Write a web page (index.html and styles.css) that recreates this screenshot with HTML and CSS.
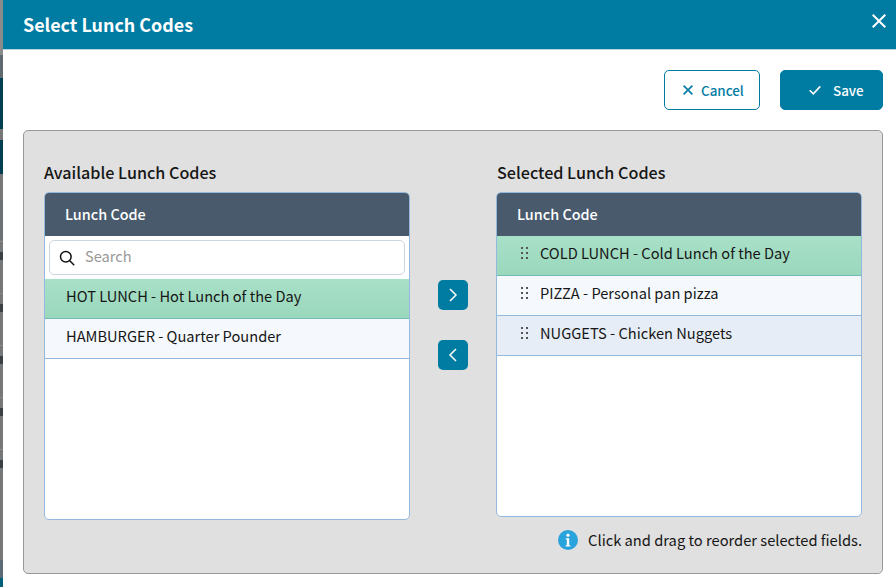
FILE: index.html
```html
<!DOCTYPE html>
<html lang="en">
<head>
<meta charset="utf-8">
<title>Select Lunch Codes</title>
<link rel="stylesheet" href="styles.css">
</head>
<body>
<div class="backdrop">
  <div class="seg s1"></div><div class="seg s2"></div><div class="seg s3"></div><div class="seg s4"></div><div class="seg s5"></div><div class="seg s6"></div><div class="seg s7"></div><div class="seg s8"></div><div class="seg s9"></div><div class="seg s10"></div>
</div>
<main class="dialog">
  <header class="title-bar">
    <h1>Select Lunch Codes</h1>
    <svg class="close" viewBox="0 0 14 14"><path d="M.7.7l12.6 12.6M13.3.7L.7 13.3"/></svg>
  </header>
  <div class="actions">
    <button class="btn btn-cancel"><svg viewBox="0 0 10 10"><path d="M.6.6l8.8 8.8M9.4.6L.6 9.4"/></svg>Cancel</button>
    <button class="btn btn-save"><svg viewBox="0 0 12 10"><path d="M.7 5.2l3.6 3.6L11.3 1.4"/></svg>Save</button>
  </div>
  <section class="panel">
    <div class="columns">
      <div class="col">
        <h2>Available Lunch Codes</h2>
        <div class="list">
          <div class="list-head">Lunch Code</div>
          <div class="search">
            <div class="search-box">
              <svg viewBox="0 0 16 16"><circle cx="6.8" cy="6.8" r="5.3"/><path d="M10.8 10.8l4.4 4.4"/></svg>
              <span>Search</span>
            </div>
          </div>
          <div class="row plain-pad green">HOT LUNCH - Hot Lunch of the Day</div>
          <div class="row plain-pad pale">HAMBURGER - Quarter Pounder</div>
        </div>
      </div>
      <div class="arrows">
        <button class="arrow"><svg viewBox="0 0 10 16"><path d="M2 2l6 6-6 6"/></svg></button>
        <button class="arrow"><svg viewBox="0 0 10 16"><path d="M8 2l-6 6 6 6"/></svg></button>
      </div>
      <div class="col">
        <h2 class="h2-right">Selected Lunch Codes</h2>
        <div class="list list-short">
          <div class="list-head">Lunch Code</div>
          <div class="row drag green"><svg class="grip" viewBox="0 0 7 12"><path d="M0 0h2v2H0zM5 0h2v2H5zM0 5h2v2H0zM5 5h2v2H5zM0 10h2v2H0zM5 10h2v2H5z"/></svg>COLD LUNCH - Cold Lunch of the Day</div>
          <div class="row drag pale"><svg class="grip" viewBox="0 0 7 12"><path d="M0 0h2v2H0zM5 0h2v2H5zM0 5h2v2H0zM5 5h2v2H5zM0 10h2v2H0zM5 10h2v2H5z"/></svg>PIZZA - Personal pan pizza</div>
          <div class="row drag blue"><svg class="grip" viewBox="0 0 7 12"><path d="M0 0h2v2H0zM5 0h2v2H5zM0 5h2v2H0zM5 5h2v2H5zM0 10h2v2H0zM5 10h2v2H5z"/></svg>NUGGETS - Chicken Nuggets</div>
        </div>
      </div>
    </div>
    <p class="hint"><svg viewBox="0 0 20 20"><circle cx="10" cy="10" r="10"/><circle class="glyph" cx="10" cy="5.2" r="1.6"/><path class="glyph" d="M7.8 8.2h3.4v7h1.2v1.4H7.6v-1.4h1.2V9.6h-1z"/></svg>Click and drag to reorder selected fields.</p>
  </section>
</main>
</body>
</html>
```
FILE: styles.css
```css
* { box-sizing: border-box; }
html, body { margin: 0; height: 100%; }
body {
  width: 896px; height: 587px; overflow: hidden; display: flex; background: #fff;
  font-family: "Noto Sans CJK SC", "Noto Sans", sans-serif; color: #161616;
}
.backdrop { width: 3px; flex: none; display: flex; flex-direction: column; background: #777; }
.seg { flex: none; }
.s1 { height: 55px; background: #8a8a8a; }
.s2 { height: 23px; background: #5f6a70; }
.s3 { height: 51px; background: #003f52; }
.s4 { height: 11px; background: #777; }
.s5 { height: 34px; background: #003f52; }
.s6 { height: 26px; background: #777; }
.s7 { height: 40px; background: #6c7176; }
.s8 { height: 236px; background: repeating-linear-gradient(#777 0 1px, #8a8a8a 1px 2px, #777 2px 12px, #3a4044 12px 20px, #777 20px 52px); }
.s9 { height: 84px; background: #777; }
.s10 { height: 27px; background: linear-gradient(#5a6a72 0 18px, #005f7a 18px); }
.dialog { flex: 1; min-width: 0; display: flex; flex-direction: column; }
.title-bar {
  height: 50px; flex: none; background: #007ca3; border-bottom: 1px solid #b8d6e0; color: #fff;
  display: flex; align-items: center; justify-content: space-between; padding: 0 10px 2px 20px;
}
h1 { margin: 0; font-size: 17.9px; font-weight: 600; line-height: 24px; }
.close { width: 14px; height: 14px; fill: none; stroke: #fff; stroke-width: 2; margin-top: -6px; }
.actions { height: 80px; flex: none; display: flex; justify-content: flex-end; align-items: flex-start; gap: 20px; padding: 20px 13px 0 0; }
.btn {
  height: 40px; border-radius: 5px; font: 500 13.4px/20px "Noto Sans CJK SC", "Noto Sans", sans-serif;
  display: flex; align-items: center; justify-content: flex-start;
}
.btn svg { fill: none; stroke: currentColor; flex: none; }
.btn-cancel { width: 96px; background: #fff; border: 1px solid #007ca3; color: #007ca3; gap: 8px; padding: 0 0 1px 18px; }
.btn-cancel svg { width: 10px; height: 10px; stroke-width: 1.6; }
.btn-save { width: 103px; background: #007ca3; border: 1px solid #007ca3; color: #fff; gap: 12px; padding: 0 0 1px 28px; }
.btn-save svg { width: 12px; height: 10px; stroke-width: 1.6; }
.panel {
  width: 860px; height: 444px; margin-left: 20px; background: #e0e0e0; border: 1px solid #999;
  border-radius: 5px; padding: 29px 20px 0;
}
.columns { display: flex; align-items: flex-start; }
.col { width: 366px; flex: none; }
h2 { margin: 0 0 8px; font-size: 16.15px; font-weight: 500; line-height: 24px; height: 24px; }
.h2-right { padding-left: 1px; }
.list {
  height: 328px; background: #fff; border: 1px solid #94b9de; border-radius: 5px; overflow: hidden;
}
.list-short { height: 325px; }
.list-head {
  height: 44px; background: #485a6c; color: #fff; font-size: 14.4px; font-weight: 500;
  line-height: 43px; padding-left: 21px; margin: -1px -1px 0;
}
.search { padding: 4px 4px 0; height: 43px; }
.search-box {
  height: 35px; border: 1px solid #ccd5df; border-radius: 5px; display: flex; align-items: center;
  gap: 10px; padding: 0 0 0 9px; color: #999; font-size: 14.65px;
}
.search-box svg { width: 16px; height: 16px; fill: none; stroke: #111; stroke-width: 1.5; margin-top: 1px; }
.search-box span { padding-bottom: 4px; }
.row {
  height: 40px; border-bottom: 1px solid #94b9de; font-size: 14.65px; display: flex; align-items: center;
}
.plain-pad { padding-left: 21px; padding-bottom: 7px; }
.drag { padding-left: 24px; padding-bottom: 6px; }
.drag .grip { margin-top: 1px; }
.green { background: linear-gradient(#a8e0c8, #9ad8bc); border-bottom-color: #74b8b8; }
.pale { background: #f5f9fd; }
.blue { background: #e6edf6; }
.grip { width: 7px; height: 12px; fill: #555; margin-right: 12px; flex: none; }
.arrows { width: 86px; flex: none; display: flex; flex-direction: column; align-items: center; gap: 30px; padding: 120px 0 0; }
.arrow {
  width: 30px; height: 30px; border: 0; border-radius: 5px; background: #007ca3; padding: 0;
  display: flex; align-items: center; justify-content: center;
}
.arrow svg { width: 10px; height: 16px; fill: none; stroke: #fff; stroke-width: 1.5; }
.hint { margin: 8px 0 0; display: flex; justify-content: flex-end; align-items: center; gap: 10px; font-size: 14.7px; line-height: 24px; }
.hint svg { width: 20px; height: 20px; fill: #29a3dc; flex: none; }
.hint .glyph { fill: #fff; }
```
